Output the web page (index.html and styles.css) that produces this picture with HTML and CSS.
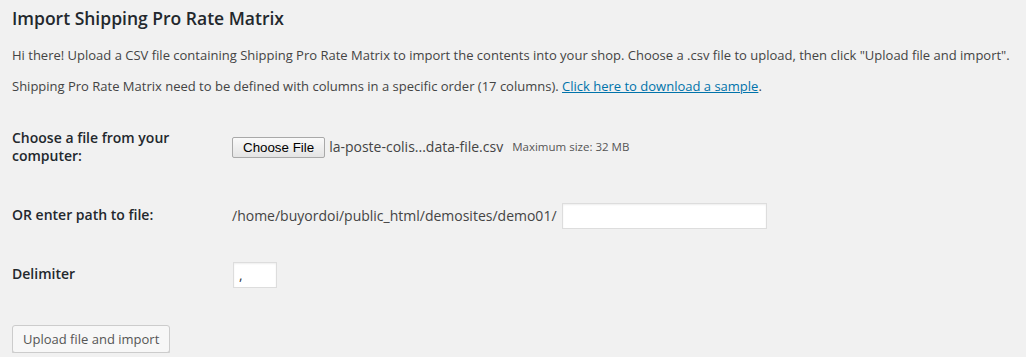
FILE: index.html
```html
<!DOCTYPE html>
<html lang="en">
<head>
    <meta charset="UTF-8">
    <title>Import Shipping Pro Rate Matrix</title>
    <link rel="stylesheet" href="styles.css">
</head>
<body>
    <div class="wrap">
        <h2 class="title">Import Shipping Pro Rate Matrix</h2>
        <p>Hi there! Upload a CSV file containing Shipping Pro Rate Matrix to import the contents into your shop. Choose a .csv file to upload, then click "Upload file and import".</p>
        <p>Shipping Pro Rate Matrix need to be defined with columns in a specific order (17 columns). <a href="#">Click here to download a sample</a>.</p>

        <div class="form-table">
            <div class="th"><label>Choose a file from your computer:</label></div>
            <div class="td">
                <span class="file-btn">Choose File</span>
                <span class="file-name">la-poste-colis...data-file.csv</span>
                <small>Maximum size: 32 MB</small>
            </div>

            <div class="th"><label>OR enter path to file:</label></div>
            <div class="td">
                <span class="path">/home/buyordoi/public_html/demosites/demo01/</span>
                <input type="text" class="path-input">
            </div>

            <div class="th"><label>Delimiter</label></div>
            <div class="td">
                <input type="text" class="delim-input" value=",">
            </div>
        </div>

        <p class="submit">
            <button class="button">Upload file and import</button>
        </p>
    </div>
</body>
</html>
```

FILE: styles.css
```css
body {
    margin: 0;
    background: #f1f1f1;
    color: #444;
    font-family: 'Open Sans', sans-serif;
    font-size: 13px;
    line-height: 1.4em;
}

.wrap {
    padding: 0 12px;
}

.title {
    margin: 0;
    padding: 7px 0 4px;
    font-size: 17.5px;
    font-weight: 600;
    line-height: 1.3;
    color: #23282d;
}

p {
    margin: 12px 0;
    line-height: 1.5;
}

a {
    color: #0073aa;
}

.form-table {
    display: grid;
    grid-template-columns: 220px 1fr;
    margin-top: 10px;
    font-size: 14px;
    line-height: 1.3;
}

.th {
    width: 200px;
    padding: 20px 10px 21px 0;
    font-weight: 600;
    color: #23282d;
}

.td {
    display: flex;
    align-items: center;
    padding: 15px 0;
}

.file-btn {
    display: inline-block;
    box-sizing: border-box;
    height: 21px;
    padding: 1px 10px;
    border: 1px solid #a9a9a9;
    border-radius: 2px;
    background: linear-gradient(#fafafa, #e4e4e4);
    font-family: 'Liberation Sans', Arial, sans-serif;
    font-size: 13.33px;
    line-height: 17px;
    color: #000;
}

.file-name {
    margin-left: 4px;
    color: #444;
}

small {
    margin-left: 9px;
    font-size: 11.5px;
    color: #555;
}

input[type="text"] {
    box-sizing: border-box;
    height: 26px;
    padding: 3px 5px;
    border: 1px solid #ddd;
    background: #fff;
    box-shadow: inset 0 1px 2px rgba(0,0,0,0.07);
    font-family: 'Open Sans', sans-serif;
    font-size: 14px;
    color: #32373c;
    outline: none;
}

.path-input {
    width: 205px;
    margin-left: 5px;
}

.delim-input {
    width: 44px;
    margin-left: 1px;
    font-size: 9px;
    color: #999;
}

.submit {
    margin: 0;
    padding: 20px 0 0;
}

.button {
    height: 28px;
    padding: 0 10px 1px;
    border: 1px solid #ccc;
    border-radius: 3px;
    background: #f7f7f7;
    box-shadow: 0 1px 0 #ccc;
    font-family: 'Open Sans', sans-serif;
    font-size: 13px;
    line-height: 26px;
    color: #555;
}
```
